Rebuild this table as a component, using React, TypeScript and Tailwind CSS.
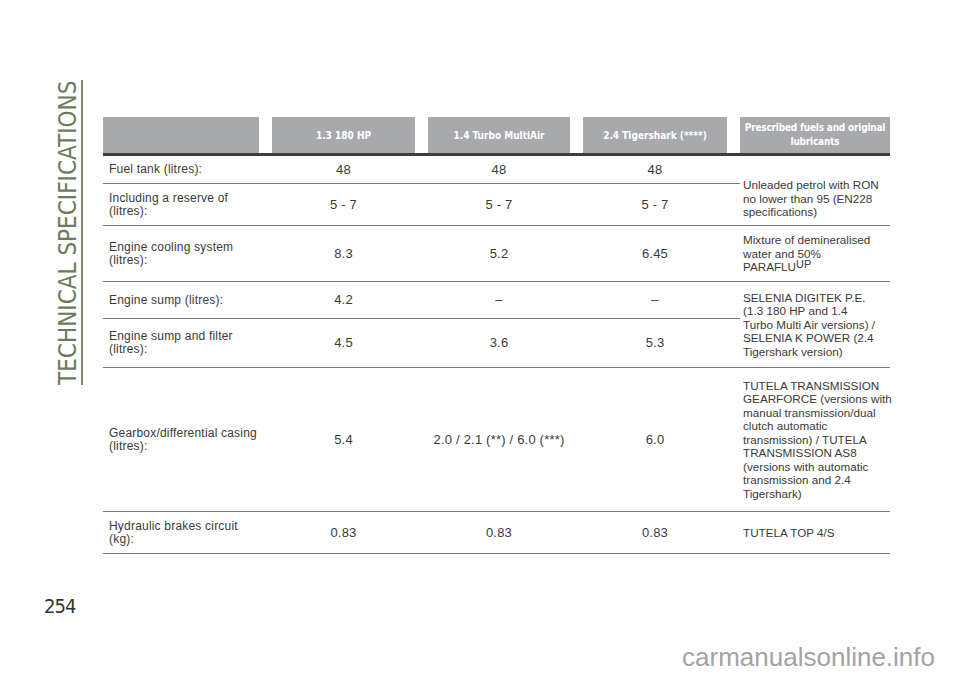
const headers = [
  ["1.3 180 HP"],
  ["1.4 Turbo MultiAir"],
  ["2.4 Tigershark (****)"],
];

const rows = [
  { label: ["Fuel tank (litres):"], values: ["48", "48", "48"] },
  { label: ["Including a reserve of", "(litres):"], values: ["5 - 7", "5 - 7", "5 - 7"] },
  { label: ["Engine cooling system", "(litres):"], values: ["8.3", "5.2", "6.45"] },
  { label: ["Engine sump (litres):"], values: ["4.2", "–", "–"] },
  { label: ["Engine sump and filter", "(litres):"], values: ["4.5", "3.6", "5.3"] },
  { label: ["Gearbox/differential casing", "(litres):"], values: ["5.4", "2.0 / 2.1 (**) / 6.0 (***)", "6.0"] },
  { label: ["Hydraulic brakes circuit", "(kg):"], values: ["0.83", "0.83", "0.83"] },
];

// lubricant column, spans rows
const fluids: { span: string; extra?: string; lines: React.ReactNode[] }[] = [
  {
    span: "row-span-2",
    extra: "pt-[16px]",
    lines: ["Unleaded petrol with RON", "no lower than 95 (EN228", "specifications)"],
  },
  {
    span: "row-span-1",
    lines: [
      "Mixture of demineralised",
      "water and 50%",
      <>
        PARAFLU<sup className="text-[11px] -top-[3px]">UP</sup>
      </>,
    ],
  },
  {
    span: "row-span-2",
    lines: [
      "SELENIA DIGITEK P.E.",
      "(1.3 180 HP and 1.4",
      "Turbo Multi Air versions) /",
      "SELENIA K POWER (2.4",
      "Tigershark version)",
    ],
  },
  {
    span: "row-span-1",
    lines: [
      "TUTELA TRANSMISSION",
      "GEARFORCE (versions with",
      "manual transmission/dual",
      "clutch automatic",
      "transmission) / TUTELA",
      "TRANSMISSION AS8",
      "(versions with automatic",
      "transmission and 2.4",
      "Tigershark)",
    ],
  },
  { span: "row-span-1", lines: ["TUTELA TOP 4/S"] },
];

// which body row each fluid cell starts on
const fluidStart: Record<number, number> = { 0: 0, 2: 1, 3: 2, 5: 3, 6: 4 };

const narrow = "font-['Liberation_Sans_Narrow','DejaVu_Sans_Condensed','Liberation_Sans',sans-serif]";

function App() {
  return (
    <div className="relative w-[960px] h-[678px] bg-white flex font-['Liberation_Sans',Arial,sans-serif] text-[#3a3a3a] overflow-hidden">
      {/* 세로 제목 + 쪽번호 */}
      <aside className="w-[103px] shrink-0 flex flex-col">
        <div className="mt-[80px] ml-[57px] flex h-[305px]">
          <span
            className={`${narrow} [writing-mode:vertical-rl] rotate-180 text-[24px] leading-[22px] text-[#6d7a5b] whitespace-nowrap text-center`}
          >
            TECHNICAL SPECIFICATIONS
          </span>
          <div className="w-[1.5px] bg-[#7d8a68] ml-[2px]" />
        </div>
        <div className={`${narrow} mt-[211px] ml-[44px] text-[20px] leading-[20px] tracking-[-1px] text-[#333]`}>
          254
        </div>
      </aside>

      {/* 표 */}
      <main className="pt-[117px]">
        <div className="grid grid-cols-[169px_156px_155px_157px_150px] grid-rows-[39px_28px_42px_56px_37px_49px_144px_42px]">
          <div className="border-b-[3px] border-[#3d3d3d] pr-[13px]">
            <div className="h-full bg-[#a7a9ac]" />
          </div>
          {headers.map((h) => (
            <div key={h[0]} className="border-b-[3px] border-[#3d3d3d] pr-[13px]">
              <div
                className={`${narrow} h-full bg-[#a7a9ac] flex items-center justify-center text-white font-bold text-[10px] whitespace-nowrap`}
              >
                {h[0]}
              </div>
            </div>
          ))}
          <div className="border-b-[3px] border-[#3d3d3d]">
            <div
              className={`${narrow} h-full bg-[#a7a9ac] flex flex-col items-center justify-center text-white font-bold text-[10px] leading-[14px] tracking-[-0.2px] text-center whitespace-nowrap`}
            >
              <span>Prescribed fuels and original</span>
              <span>lubricants</span>
            </div>
          </div>

          {rows.map((r, i) => {
            const f = fluidStart[i] !== undefined ? fluids[fluidStart[i]] : null;
            return (
              <div key={i} className="contents">
                <div className="border-b-[1.5px] border-[#7d7d7d] pl-[6px] flex flex-col justify-center text-[12px] leading-[13px] tracking-[0.2px] whitespace-nowrap">
                  {r.label.map((l) => (
                    <span key={l}>{l}</span>
                  ))}
                </div>
                {r.values.map((v, j) => (
                  <div
                    key={j}
                    className="border-b-[1.5px] border-[#7d7d7d] pr-[13px] flex items-center justify-center text-[13px] tracking-[0.2px] whitespace-nowrap"
                  >
                    {v}
                  </div>
                ))}
                {f && (
                  <div
                    className={`${f.span} ${f.extra ?? ""} col-start-5 border-b-[1.5px] border-[#7d7d7d] pl-[3px] flex flex-col justify-center text-[11.7px] leading-[13.5px] whitespace-nowrap`}
                  >
                    {f.lines.map((l, k) => (
                      <span key={k}>{l}</span>
                    ))}
                  </div>
                )}
              </div>
            );
          })}
        </div>
      </main>

      {/* 워터마크 */}
      <div className="absolute right-[25px] bottom-[6px] text-[26px] leading-[30px] text-[#a3a3a3]">
        carmanualsonline.info
      </div>
    </div>
  );
}

export default App;
